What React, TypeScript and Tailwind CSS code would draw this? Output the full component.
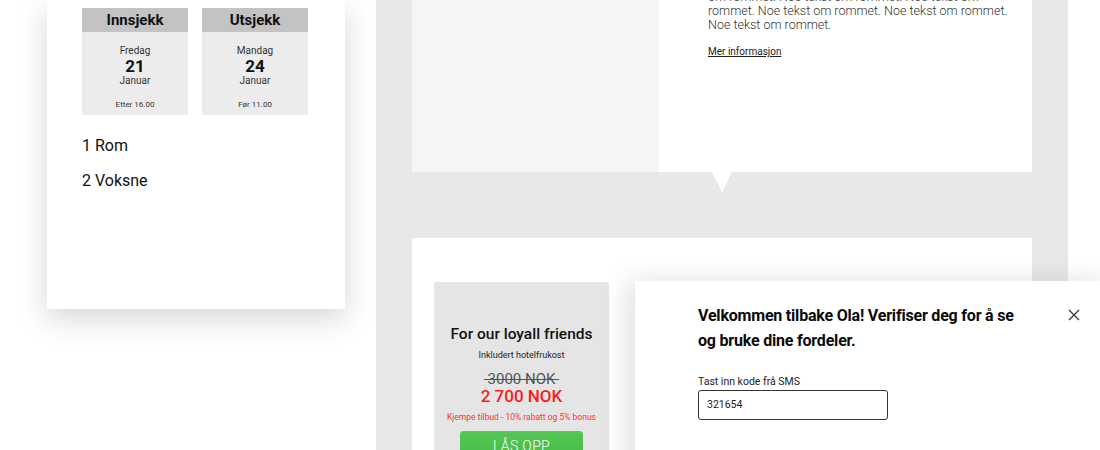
import React from "react";

const DateBox: React.FC<{ title: string; day: string; date: string; month: string; note: string }> = ({
  title,
  day,
  date,
  month,
  note,
}) => (
  <div className="w-[106px] h-[107px] bg-[#ececec] flex flex-col items-center">
    <div className="w-full h-[24px] bg-[#c3c3c3] flex items-center justify-center text-[15px] font-bold text-[#111]">
      {title}
    </div>
    <div className="mt-[13px] text-[10px] leading-[12px] text-[#333]">{day}</div>
    <div className="text-[17px] leading-[18px] font-bold text-[#111]">{date}</div>
    <div className="text-[10px] leading-[12px] text-[#333]">{month}</div>
    <div className="mt-[13px] text-[8px] leading-[10px] text-[#333]">{note}</div>
  </div>
);

const App: React.FC = () => {
  return (
    <div className="relative w-[1100px] h-[450px] overflow-hidden bg-white flex font-['Roboto',sans-serif]">
      {/* Booking summary */}
      <div className="w-[376px] shrink-0">
        <div className="ml-[47px] w-[298px] h-[309px] bg-white shadow-[0_10px_28px_rgba(0,0,0,0.16)] pl-[35px] pt-[8px]">
          <div className="flex gap-[14px]">
            <DateBox title="Innsjekk" day="Fredag" date="21" month="Januar" note="Etter 16.00" />
            <DateBox title="Utsjekk" day="Mandag" date="24" month="Januar" note="Før 11.00" />
          </div>
          <div className="mt-[21px] text-[16px] leading-[20px] text-[#111]">1 Rom</div>
          <div className="mt-[15px] text-[16px] leading-[20px] text-[#111]">2 Voksne</div>
        </div>
      </div>

      {/* Rooms column */}
      <div className="w-[692px] shrink-0 bg-[#e8e8e8] pl-[36px]">
        <div className="relative w-[620px] h-[172px] bg-white flex">
          <div className="w-[247px] h-full bg-[#f5f5f5]" />
          <div className="pl-[49px] -mt-[24px]">
            <p className="text-[12.5px] leading-[14px] font-light text-[#333] whitespace-nowrap">
              <span className="block">Noe tekst om rommet. Noe tekst om rommet. Noe tekst</span>
              <span className="block">om rommet. Noe tekst om rommet. Noe tekst om</span>
              <span className="block">rommet. Noe tekst om rommet. Noe tekst om rommet.</span>
              <span className="block">Noe tekst om rommet.</span>
            </p>
            <a className="block mt-[14px] text-[10px] leading-[12px] text-[#222] underline">Mer informasjon</a>
          </div>
          <div className="absolute left-[300px] top-full w-0 h-0 border-l-[10px] border-r-[10px] border-t-[20px] border-l-transparent border-r-transparent border-t-white" />
        </div>

        <div className="mt-[66px] w-[620px] h-[220px] bg-white pl-[22px] pt-[44px]">
          <div className="w-[175px] h-[200px] bg-[#e5e5e5] rounded-[2px] flex flex-col items-center pt-[42px]">
            <div className="text-[15.5px] leading-[20px] font-medium text-[#111]">For our loyall friends</div>
            <div className="mt-[5px] text-[9px] leading-[12px] text-[#222]">Inkludert hotelfrukost</div>
            <div className="mt-[10px] text-[15px] leading-[17px] text-[#555] line-through">{"\u00a03000 NOK\u00a0"}</div>
            <div className="-mt-[2px] text-[17px] leading-[20px] font-medium text-[#ff1a1a]">2 700 NOK</div>
            <div className="mt-[5px] text-[8.5px] leading-[12px] text-[#f33]">Kjempe tilbud - 10% rabatt og 5% bonus</div>
            <button className="mt-[8px] w-[123px] h-[30px] rounded-[4px] bg-gradient-to-b from-[#55c755] to-[#46b946] text-white text-[14px] font-light tracking-wide">
              LÅS OPP
            </button>
          </div>
        </div>
      </div>

      {/* Verification modal */}
      <div className="absolute left-[635px] top-[281px] w-[480px] h-[200px] bg-white shadow-[-8px_0_24px_rgba(0,0,0,0.12)] pl-[63px] pt-[22px]">
        <div className="flex">
          <h2 className="w-[330px] text-[16px] leading-[25px] font-bold tracking-[-0.2px] text-[#0a0a0a]">
            Velkommen tilbake Ola! Verifiser deg for å se og bruke dine fordeler.
          </h2>
          <button className="ml-[40px] mt-[6px] h-[12px] w-[12px] text-[#333]" aria-label="Lukk">
            <svg viewBox="0 0 12 12" className="w-[12px] h-[12px]" fill="none" stroke="currentColor" strokeWidth={1.2}>
              <path d="M1 1l10 10M11 1L1 11" />
            </svg>
          </button>
        </div>
        <label className="block mt-[22px] text-[10.5px] leading-[14px] text-[#222]">Tast inn kode frå SMS</label>
        <div className="mt-[1px] w-[190px] h-[30px] border border-[#333] rounded-[3px] flex items-center pl-[8px] text-[10.5px] text-[#222]">
          321654
        </div>
      </div>
    </div>
  );
};

export default App;
